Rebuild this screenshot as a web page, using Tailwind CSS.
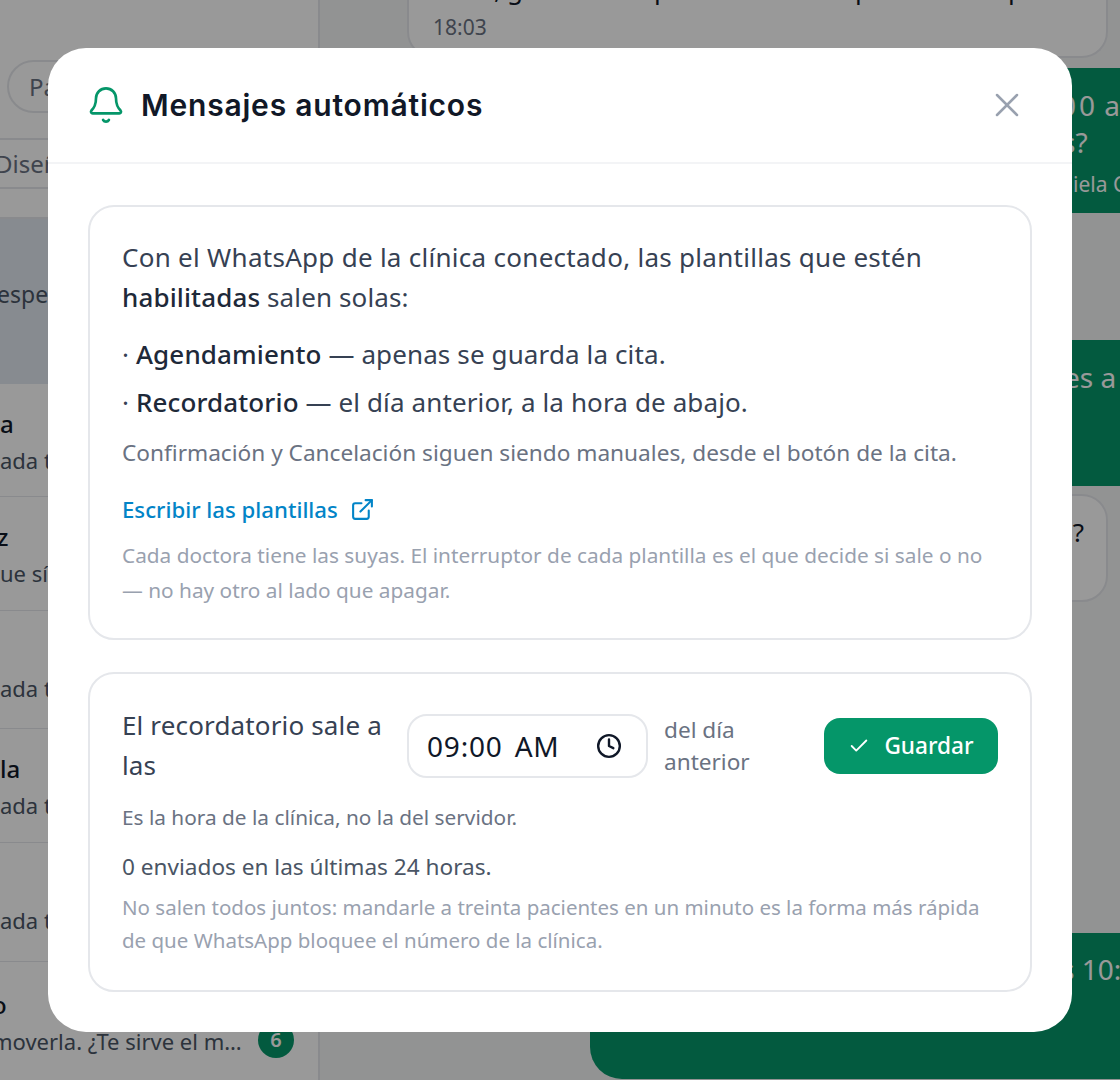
<!doctype html>
<html lang="es">
<head>
<meta charset="utf-8">
<script src="https://cdn.jsdelivr.net/npm/@tailwindcss/browser@4"></script>
<title>Mensajes automáticos</title>
</head>
<body class="bg-white">
<div class="relative flex h-[1080px] w-[1120px] overflow-hidden bg-white font-['Noto_Sans','Liberation_Sans',sans-serif]">
  <!-- sidebar -->
  <aside class="flex h-full w-[320px] shrink-0 flex-col overflow-hidden border-r-2 border-gray-200 bg-white">
    <div class="h-[60px] shrink-0"></div>
    <div class="ml-[7px] flex h-[53px] w-[200px] shrink-0 items-center rounded-full border-2 border-gray-200 pl-[20px] text-[24px] text-gray-500">Pa</div>
    <div class="mt-[25px] flex h-[51px] shrink-0 items-center border-y-2 border-gray-200 text-[24px] text-gray-500"><span class="-ml-[5px]">Diseño</span></div>
    <div class="h-[30px] shrink-0 border-b-2 border-gray-200"></div>
    <div class="flex h-[165px] shrink-0 items-center bg-slate-200 text-[23px] text-gray-600"><span class="-ml-[3px] -mt-[14px]">espera</span></div>
    <div class="flex h-[113px] shrink-0 flex-col justify-center border-b border-gray-200 pt-[3px] leading-[36px]"><span class="text-[24px] font-medium text-gray-900">a</span><span class="text-[22px] text-gray-600">ada t</span></div>
    <div class="flex h-[114px] shrink-0 flex-col justify-center border-b border-gray-200 pt-[3px] leading-[36px]"><span class="-ml-[3px] text-[24px] font-medium text-gray-900">z</span><span class="text-[22px] text-gray-600">ue sí.</span></div>
    <div class="flex h-[118px] shrink-0 flex-col justify-center border-b border-gray-200 pt-[36px] leading-[36px]"><span class="text-[22px] text-gray-600">ada t</span></div>
    <div class="flex h-[114px] shrink-0 flex-col justify-center border-b border-gray-200 pt-[3px] leading-[36px]"><span class="text-[24px] font-medium text-gray-900">la</span><span class="text-[22px] text-gray-600">ada t</span></div>
    <div class="flex h-[119px] shrink-0 flex-col justify-center border-b border-gray-200 pt-[36px] leading-[36px]"><span class="text-[22px] text-gray-600">ada t</span></div>
    <div class="flex h-[119px] shrink-0 items-start pt-[25px] leading-[36px]">
      <div class="flex w-full items-start justify-between pr-[24px]">
        <div class="flex flex-col text-[22px]"><span class="-ml-[8px] text-[24px] font-medium text-gray-900">o</span><span class="-ml-[8px] whitespace-nowrap text-gray-600">moverla. ¿Te sirve el m…</span></div>
        <span class="mt-[35px] flex h-[36px] w-[36px] items-center justify-center rounded-full bg-[#059669] text-[20px] font-semibold text-white">6</span>
      </div>
    </div>
  </aside>
  <!-- thread -->
  <main class="flex min-w-0 flex-1 flex-col overflow-hidden bg-[#f4f5f6] text-[28px] leading-[40px]">
    <div class="ml-[87px] mr-[12px] h-[58px] shrink-0 rounded-b-[26px] border-x-2 border-b-2 border-gray-200 bg-white">
      <div class="relative -mt-[31px] h-[40px] whitespace-nowrap pl-[85px] text-[26px] text-gray-900"><span>,</span><span class="ml-[6px]">g</span><span class="ml-[131px]">p</span><span class="ml-[185px]">p</span><span class="ml-[137px]">p</span></div>
      <div class="mt-[3px] pl-[24px] text-[21px] leading-[30px] text-gray-500">18:03</div>
    </div>
    <div class="mt-[10px] flex h-[145px] w-[480px] shrink-0 flex-col self-end whitespace-nowrap bg-[#059669] pl-[420px] pt-[17px] text-white">
      <span class="tracking-[3px] [word-spacing:-4px]">00 a</span>
      <span class="-mt-[3px] pl-[2px]">s?</span>
      <span class="mt-[7px] pl-[13px] text-[21px] leading-[30px]">iela C</span>
    </div>
    <div class="mt-[127px] h-[146px] w-[480px] shrink-0 self-end whitespace-nowrap bg-[#059669] pl-[424px] pt-[17px] text-white">es a</div>
    <div class="ml-[87px] mr-[12px] mt-[8px] h-[108px] shrink-0 rounded-[26px] border-2 border-gray-200 bg-white pr-[22px] pt-[16px] text-right text-[26px] text-gray-900">?</div>
    <div class="mt-[331px] h-[146px] w-[530px] shrink-0 self-end whitespace-nowrap rounded-bl-[32px] bg-[#059669] pl-[471px] pt-[16px] text-white">s 10:</div>
  </main>

  <!-- overlay -->
  <div class="absolute inset-0 bg-black/40"></div>

  <!-- modal -->
  <section class="absolute left-[48px] top-[48px] flex h-[984px] w-[1024px] flex-col overflow-hidden rounded-[38px] bg-white">
    <header class="flex h-[116px] shrink-0 items-center justify-between border-b-2 border-gray-100 pl-[38px] pr-[45px]">
      <div class="flex items-center gap-[15px]">
        <svg class="h-[40px] w-[40px] text-[#059669]" viewBox="0 0 24 24" fill="none" stroke="currentColor" stroke-width="1.6" stroke-linecap="round" stroke-linejoin="round"><path d="M10.268 21a2 2 0 0 0 3.464 0"/><path d="M3.262 15.326A1 1 0 0 0 4 17h16a1 1 0 0 0 .74-1.673C19.41 13.956 18 12.499 18 8A6 6 0 0 0 6 8c0 4.499-1.411 5.956-2.738 7.326"/></svg>
        <h2 class="font-['Inter',sans-serif] text-[30px] font-semibold leading-[40px] tracking-[0.8px] text-[#111827]">Mensajes automáticos</h2>
      </div>
      <svg class="h-[40px] w-[40px] text-gray-400" viewBox="0 0 24 24" fill="none" stroke="currentColor" stroke-width="1.5" stroke-linecap="round" stroke-linejoin="round"><path d="M18 6 6 18"/><path d="m6 6 12 12"/></svg>
    </header>
    <div class="flex flex-col gap-[32px] px-[40px] pt-[41px]">
      <div class="h-[435px] rounded-[26px] border-2 border-gray-200 px-[32px] pt-[30px]">
        <p class="text-[26px] leading-[40px] tracking-[0.28px] text-gray-700">Con el WhatsApp de la clínica conectado, las plantillas que estén <span class="tracking-[0.12px]"><strong class="font-medium text-gray-800">habilitadas</strong> salen solas:</span></p>
        <p class="mt-[17px] text-[26px] leading-[40px] tracking-[0.12px] text-gray-700">· <strong class="font-medium text-gray-800">Agendamiento</strong> — apenas se guarda la cita.</p>
        <p class="mt-[8px] text-[26px] leading-[40px] tracking-[0.12px] text-gray-700">· <strong class="font-medium text-gray-800">Recordatorio</strong> — el día anterior, a la hora de abajo.</p>
        <p class="mt-[13px] text-[22.65px] leading-[35px] text-gray-500">Confirmación y Cancelación siguen siendo manuales, desde el botón de la cita.</p>
        <a class="mt-[22px] flex h-[35px] items-center gap-[12px] text-[22.2px] font-medium text-[#0284c7]">Escribir las plantillas
          <svg class="h-[25px] w-[25px]" viewBox="0 0 24 24" fill="none" stroke="currentColor" stroke-width="2" stroke-linecap="round" stroke-linejoin="round"><path d="M15 3h6v6"/><path d="M10 14 21 3"/><path d="M18 13v6a2 2 0 0 1-2 2H5a2 2 0 0 1-2-2V8a2 2 0 0 1 2-2h6"/></svg>
        </a>
        <p class="mt-[11px] text-[20.8px] leading-[35px] text-gray-400">Cada doctora tiene las suyas. El interruptor de cada plantilla es el que decide si sale o no — no hay otro al lado que apagar.</p>
      </div>
      <div class="h-[320px] rounded-[26px] border-2 border-gray-200 px-[32px] pt-[32px]">
        <div class="flex h-[80px] items-center gap-[16px]">
          <span class="-mt-[2px] w-[269px] shrink-0 text-[26px] leading-[40px] tracking-[0.15px] text-gray-700">El recordatorio sale a las</span>
          <div class="flex h-[64px] w-[241px] shrink-0 items-center justify-between rounded-[20px] border-2 border-gray-200 pl-[18px] pr-[24px] text-[28px] tracking-[0.8px] text-gray-900 [word-spacing:4px]">
            <span>09:00 AM</span>
            <svg class="h-[26px] w-[26px]" viewBox="0 0 24 24" fill="none" stroke="currentColor" stroke-width="2.2" stroke-linecap="round" stroke-linejoin="round"><circle cx="12" cy="12" r="10"/><path d="M12 6v6l4 2"/></svg>
          </div>
          <span class="w-[120px] shrink-0 text-[22.6px] leading-[32px] text-gray-500">del día anterior</span>
          <button class="ml-auto flex h-[56px] w-[174px] items-center justify-center gap-[14px] rounded-[16px] bg-[#059669] text-[22.6px] font-medium text-white">
            <svg class="h-[22px] w-[22px]" viewBox="0 0 24 24" fill="none" stroke="currentColor" stroke-width="2" stroke-linecap="round" stroke-linejoin="round"><path d="M20 6 9 17l-5-5"/></svg>
            Guardar
          </button>
        </div>
        <p class="mt-[15px] text-[20.8px] leading-[32px] text-gray-500">Es la hora de la clínica, no la del servidor.</p>
        <p class="mt-[17px] text-[22.6px] leading-[34px] text-gray-600">0 enviados en las últimas 24 horas.</p>
        <p class="mt-[7px] text-[20.5px] leading-[33px] text-gray-400">No salen todos juntos: mandarle a treinta pacientes en un minuto es la forma más rápida de que WhatsApp bloquee el número de la clínica.</p>
      </div>
    </div>
  </section>
</div>
</body>
</html>
